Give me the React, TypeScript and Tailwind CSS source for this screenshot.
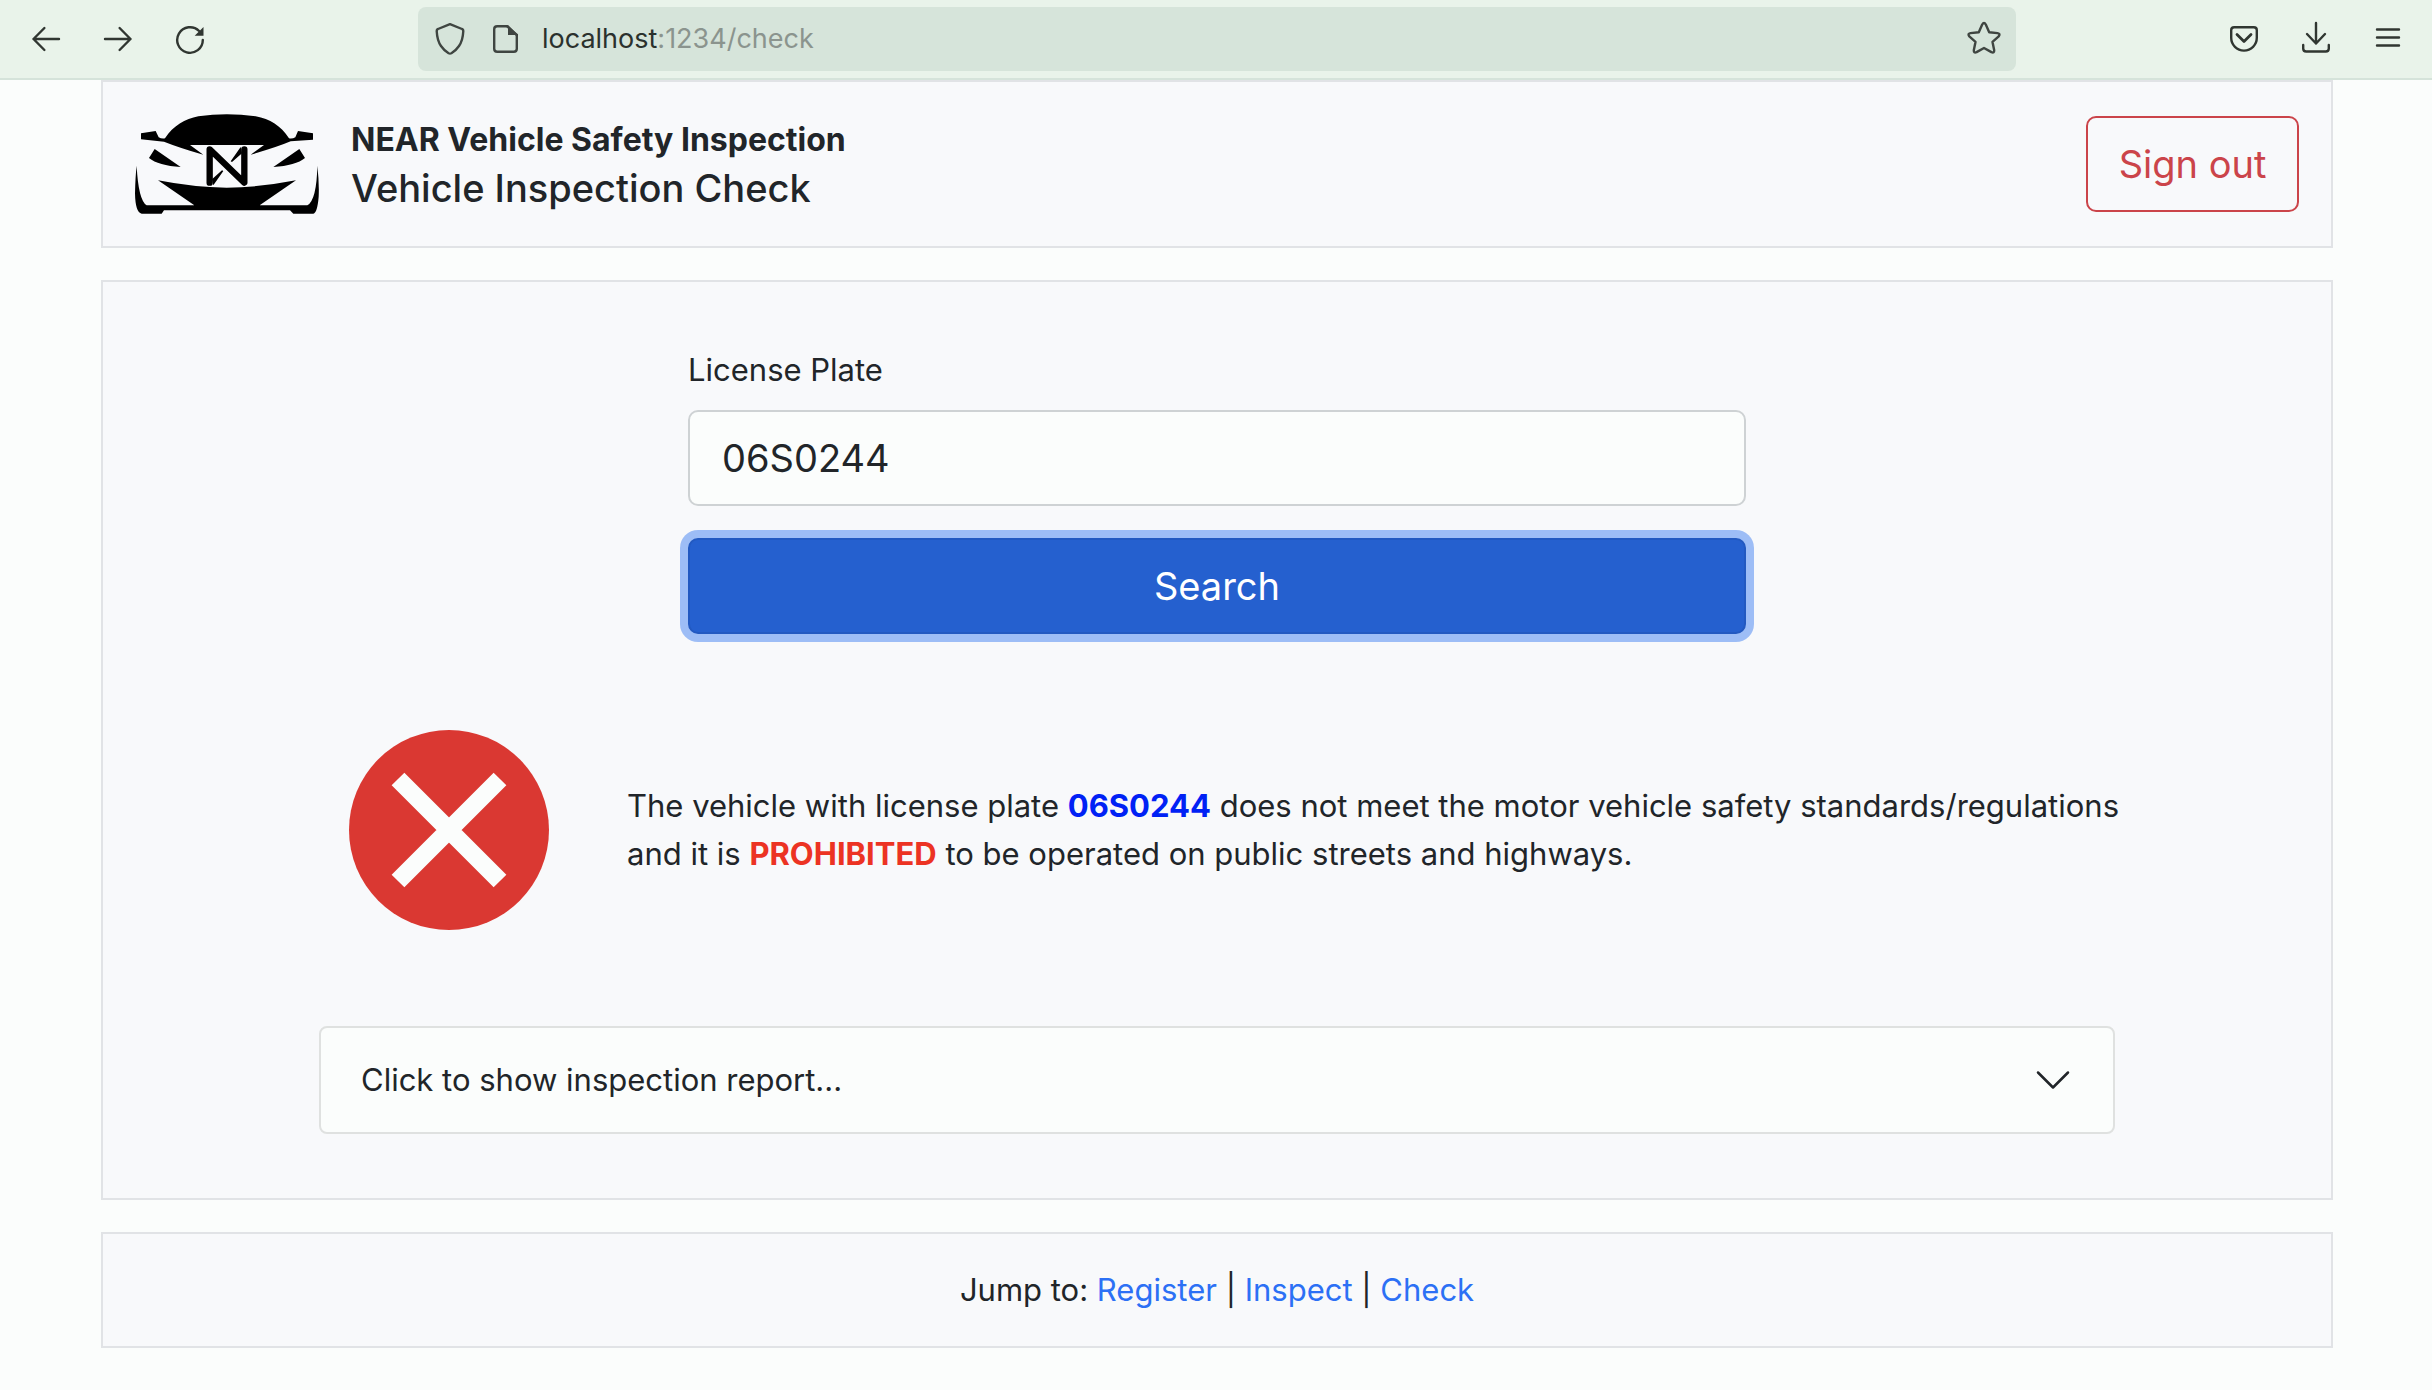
import type { ReactNode } from 'react';

function ToolbarButton({ label, children }: { label: string; children: ReactNode }) {
  return (
    <button type="button" aria-label={label} className="flex size-10 shrink-0 items-center justify-center text-[#303631]">
      {children}
    </button>
  );
}

const line = {
  fill: 'none',
  stroke: 'currentColor',
  strokeWidth: 2.4,
  strokeLinecap: 'round',
  strokeLinejoin: 'round',
} as const;

function BrowserBar() {
  return (
    <header className="flex h-20 items-center border-b-2 border-[#d5e3da] bg-[#e9f3ea] pr-6 pl-[26px]">
      <nav aria-label="Browser" className="flex shrink-0 gap-8">
        <ToolbarButton label="Back">
          <svg viewBox="0 0 32 32" className="size-8" {...line}>
            <path d="M29 16H3.5M14.4 5 3.5 16l10.9 11" />
          </svg>
        </ToolbarButton>
        <ToolbarButton label="Forward">
          <svg viewBox="0 0 32 32" className="size-8" {...line}>
            <path d="M3 16h25.5M17.6 5l10.9 11-10.9 11" />
          </svg>
        </ToolbarButton>
        <ToolbarButton label="Reload">
          <svg viewBox="0 0 32 32" className="size-8" {...line}>
            <path d="M28.8 17a12.8 12.8 0 1 1-3.7-9" />
            <path d="M29.5 4v8.8h-8.8z" fill="currentColor" stroke="none" />
          </svg>
        </ToolbarButton>
      </nav>
      <div className="ml-[208px] flex h-16 min-w-0 flex-1 items-center rounded-lg bg-[#d6e4da] px-3 text-[#3f4541]">
        <svg viewBox="0 0 40 40" className="size-10 shrink-0" {...line}>
          <path d="M20 5.200 32 10q1.400.5 1.300 2c-.3 6-1.300 10.800-4.300 15-2.300 3.300-4.800 5.700-7.600 7.300q-1.400.7-2.800 0C15.800 32.700 13.300 30.300 11 27c-3-4.200-4-9-4.300-15q-.1-1.500 1.300-2Z" />
        </svg>
        <svg viewBox="0 0 40 40" className="ml-4 size-10 shrink-0" {...line}>
          <path d="M21 7.200H11.200q-3 0-3 3v19.600q0 3 3 3h16.600q3 0 3-3V16" />
          <path d="M22 6v10h10z" fill="currentColor" stroke="none" />
          <path d="M21 7.200 30.800 16" />
        </svg>
        <div role="textbox" aria-label="Address" className="ml-4 flex-1 text-[27px] leading-10 text-[#2b312d]">
          localhost<span className="text-[#8b948e]">:1234/check</span>
        </div>
        <button type="button" aria-label="Bookmark this page" className="size-10 shrink-0">
          <svg viewBox="0 0 40 40" className="size-10" {...line}>
            <path d="M18.200 5.500q1.800-3.100 3.600 0l3.400 7.700 8.300.9q3.300.7 1.200 3.300l-6.200 5.500 1.700 8.300q.2 3.100-2.800 1.900L20 29l-7.400 4.100q-3 1.200-2.800-1.900l1.700-8.300-6.200-5.500q-2.100-2.600 1.200-3.300l8.300-.9Z" />
          </svg>
        </button>
      </div>
      <div className="ml-[208px] flex shrink-0 gap-8">
        <ToolbarButton label="Save to Pocket">
          <svg viewBox="0 0 40 40" className="size-10" {...line}>
            <path d="M10.200 8.200h19.600q3 0 3 3v7.600a12.800 12.800 0 0 1-25.600 0v-7.600q0-3 3-3Z" />
            <path d="m13 15.500 7 7 7-7" strokeWidth={2.8} />
          </svg>
        </ToolbarButton>
        <ToolbarButton label="Downloads">
          <svg viewBox="0 0 40 40" className="size-10" {...line}>
            <path d="M20 4v20.500M11 15l9 9.500 9-9.500M7.200 26v3.500q0 3 3 3h19.600q3 0 3-3V26" />
          </svg>
        </ToolbarButton>
        <ToolbarButton label="Open menu">
          <svg viewBox="0 0 40 40" className="size-10" {...line}>
            <path d="M9 10.500h22M9 18.500h22M9 26.500h22" />
          </svg>
        </ToolbarButton>
      </div>
    </header>
  );
}

function CarLogo() {
  return (
    <svg viewBox="45 42 552 300" className="h-[100px] w-[184px] shrink-0" role="img" aria-label="NEAR car">
      <path d="M63 100 107 93 116 112Q125 117 135 115C160 77 195 57 235 49Q320 36 407 49C450 57 482 77 507 115Q517 117 526 112L534 93 579 100V119L512 124Q470 142 392 164L432 135H210L250 164Q180 144 132 125L63 118Z" />
      <path d="M104 147 182 201Q115 197 87 174ZM538 147 460 201Q527 197 555 174Z" />
      <path d="M114 241Q220 262 320 263 420 262 528 241L419 316H562Q590 300 592 197 598 250 596 290 592 338 580 341H520L510 331H132L125 341H65Q46 338 45 280 46 230 50 197 55 300 80 316H223Z" />
      <path d="M269 248V148L373 248V148" fill="none" stroke="#000" strokeWidth="19" strokeLinecap="round" strokeLinejoin="round" />
      <path d="M276 238 306 211 310 213 280 256ZM366 160 336 186 332 184 362 141Z" />
    </svg>
  );
}

const card = 'border-2 border-[#e1e3e6] bg-[#f8f9fb]';

export default function App() {
  return (
    <div className="min-h-screen bg-[#fbfdfc] font-[Inter,sans-serif] text-[31px] leading-[48px] text-[#212529]">
      <BrowserBar />
      <div className="pl-0.5">
        <div className="mx-auto flex max-w-[2232px] flex-col gap-8">
          <div className={`${card} flex items-center p-8`}>
            <CarLogo />
            <div className="ml-8 flex-1">
              <p className="text-[32px] font-bold">NEAR Vehicle Safety Inspection</p>
              <h1 className="text-[38px] font-medium">Vehicle Inspection Check</h1>
            </div>
            <button type="button" className="h-24 w-[213px] rounded-[10px] border-2 border-[#cb444a] text-[38px] text-[#cb444a]">
              Sign out
            </button>
          </div>

          <main className={`${card} flex flex-col items-center gap-24 px-[216px] py-16`}>
            <form className="w-full max-w-[1058px]" onSubmit={(e) => e.preventDefault()}>
              <label htmlFor="plate" className="mb-4 block">License Plate</label>
              <input
                id="plate"
                type="text"
                defaultValue="06S0244"
                className="block h-24 w-full rounded-[10px] border-2 border-[#ced2d4] bg-[#fbfdfc] px-8 text-[38px]"
              />
              <button
                type="submit"
                className="mt-8 block h-24 w-full rounded-[10px] border-2 border-[#2259c1] bg-[#2560cf] text-[38px] text-white ring-8 ring-[#9dbdf6]"
              >
                Search
              </button>
            </form>

            <div className="flex w-full items-center pl-[30px]">
              <svg viewBox="0 0 200 200" className="size-[200px] shrink-0" role="img" aria-label="Failed">
                <circle cx="100" cy="100" r="100" fill="#da3832" />
                <path d="M49 49 151 151M151 49 49 151" stroke="#fbfdfc" strokeWidth="18" />
              </svg>
              <p className="-mr-6 ml-[78px] flex-1">
                The vehicle with license plate <strong className="font-bold text-[#0021f5]">06S0244</strong> does not meet the
                motor vehicle safety standards/regulations and it is{' '}
                <strong className="font-bold text-[#ec3323]">PROHIBITED</strong> to be operated on public streets and highways.
              </p>
            </div>

            <button
              type="button"
              aria-expanded="false"
              className="flex h-[108px] w-full items-center justify-between rounded-lg border-2 border-[#dfe1e0] bg-[#fbfdfc] px-10 text-left"
            >
              Click to show inspection report...
              <svg viewBox="0 0 16 16" className="size-10" fill="none" stroke="currentColor" strokeLinecap="round" strokeLinejoin="round">
                <path d="m2 5 6 6 6-6" />
              </svg>
            </button>
          </main>

          <footer className={`${card} py-8 text-center`}>
            Jump to: <a href="#register" className="text-[#2c70f5]">Register</a> |{' '}
            <a href="#inspect" className="text-[#2c70f5]">Inspect</a> |{' '}
            <a href="#check" className="text-[#2c70f5]">Check</a>
          </footer>
        </div>
      </div>
    </div>
  );
}
